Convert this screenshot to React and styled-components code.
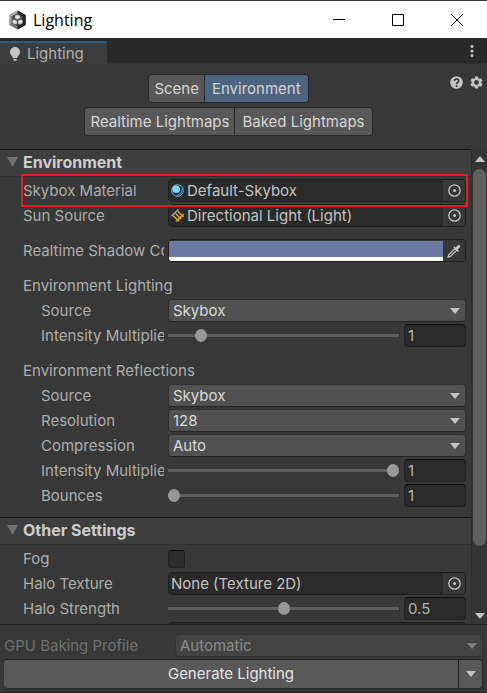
import React from "react";
import styled, { createGlobalStyle, css } from "styled-components";

const Global = createGlobalStyle`
  *, *::before, *::after { box-sizing: border-box; }
  body {
    margin: 0;
    background: #383838;
    color: #c4c4c4;
    font: 15px/22px Inter, "Liberation Sans", sans-serif;
  }
  button, input, select { font: inherit; color: inherit; margin: 0; }
`;

const Window = styled.div`
  display: flex;
  flex-direction: column;
  height: 100vh;
  overflow: hidden;
`;

const TitleBar = styled.header`
  display: flex;
  align-items: center;
  flex: none;
  height: 38px;
  padding: 0 1px 0 8px;
  border-top: 1px solid #33333b;
  background: #fff;
  color: #000;
`;

const WindowTitle = styled.h1`
  flex: 1;
  margin: 0 0 0 6px;
  font: 400 16px/24px "Open Sans", "Noto Sans", sans-serif;
`;

const CaptionButton = styled.button`
  display: grid;
  place-items: center;
  width: 59px;
  height: 37px;
  padding: 0;
  border: 0;
  background: none;
`;

const TabStrip = styled.nav`
  display: flex;
  justify-content: space-between;
  flex: none;
  height: 26px;
  padding-top: 3px;
  background: #282828;
  box-shadow: inset 0 -1px #303030;
`;

const Tab = styled.button`
  display: flex;
  align-items: center;
  gap: 7px;
  width: 107px;
  padding: 0 0 0 10px;
  border: 0;
  border-top: 2px solid #2c5d87;
  border-radius: 0 2px 0 0;
  background: #3c3c3c;
  color: #b0b0b0;
`;

const IconButton = styled.button`
  display: grid;
  place-items: center;
  width: ${(p) => p.$width || 20}px;
  height: 20px;
  padding: 0;
  border: 0;
  background: none;
  color: #c4c4c4;
`;

const Toolbar = styled.div`
  position: relative;
  flex: none;
  display: flex;
  flex-direction: column;
  align-items: center;
  gap: 4px;
  height: 85px;
  padding: 10px 30px 0 0;
`;

const ToolbarActions = styled.div`
  position: absolute;
  top: 8px;
  right: 1px;
  display: flex;
`;

const Segments = styled.div`
  display: flex;
  border: 1px solid #282828;
  border-radius: 4px;
  background: #282828;
  gap: 1px;
  overflow: hidden;
`;

const Segment = styled.button`
  height: 27px;
  padding: 0 5px;
  border: 0;
  background: ${(p) => (p.$active ? "#4d6380" : "#585858")};
  color: #d6d6d6;
  white-space: nowrap;

  &:last-child { padding: 0 7px; }
`;

const Body = styled.div`
  display: flex;
  flex: 1;
  min-height: 0;
`;

const Scroller = styled.main`
  flex: 1;
  min-width: 0;
  overflow: hidden auto;
  scrollbar-width: none;
`;

const SectionHeader = styled.h2`
  display: flex;
  align-items: center;
  gap: 5px;
  height: 28px;
  margin: 0;
  padding: 0 0 2px 7px;
  border-top: 1px solid #1a1a1a;
  border-bottom: 1px solid #303030;
  background: #3e3e3e;
  color: #cdcdcd;
  font-size: 16px;
  font-weight: 700;
`;

const Rows = styled.div`
  display: flex;
  flex-direction: column;
  gap: 2px;
  padding: 2px 5px ${(p) => p.$bottom || 0}px 23px;
`;

const Row = styled.div`
  position: relative;
  display: grid;
  grid-template-columns: 141px minmax(0, 1fr);
  align-items: center;
  column-gap: 4px;
  height: 23px;
  margin-top: ${(p) => (p.$spaced ? 10 : 0)}px;

  ${(p) =>
    p.$marked &&
    css`
      &::after {
        content: "";
        position: absolute;
        inset: -5px -2px;
        border: 2px solid #ed1c24;
        pointer-events: none;
        z-index: 1;
      }
    `}
`;

const Label = styled.label`
  padding-left: ${(p) => (p.$indent ? 18 : 0)}px;
  overflow: hidden;
  white-space: nowrap;
  color: #aeaeae;
`;

const GroupTitle = styled.h3`
  height: 23px;
  margin: 10px 0 0;
  color: #aeaeae;
  font-size: 15px;
  line-height: 23px;
  font-weight: 400;
`;

const ObjectBox = styled.div`
  display: flex;
  align-items: center;
  height: 23px;
  padding-left: 2px;
  border: 1px solid #1f1f1f;
  border-radius: 4px;
  background: #2a2a2a;
  overflow: hidden;
`;

const ObjectInput = styled.input`
  flex: 1;
  min-width: 0;
  padding: 0;
  margin-left: ${(p) => (p.$plain ? 0 : 3)}px;
  border: 0;
  background: none;
  color: #c4c4c4;
  outline: 0;
`;

const PickButton = styled.button`
  display: grid;
  place-items: center;
  width: 22px;
  height: 21px;
  padding: 0;
  border: 0;
  background: #373737;
  color: #c4c4c4;
`;

const ColorBox = styled(ObjectBox)`
  padding-left: 0;
  background: #373737;
`;

const Swatch = styled.button`
  flex: 1;
  height: 20px;
  padding: 0;
  border: 0;
  border-bottom: 4px solid #fff;
  background: #6b7aa3;
`;

const SelectWrap = styled.div`
  display: grid;
  align-items: center;
  flex: 1;
  opacity: ${(p) => (p.$disabled ? 0.5 : 1)};

  & > * { grid-area: 1 / 1; }
  & > svg { justify-self: end; margin-right: 6px; pointer-events: none; }
`;

const Select = styled.select`
  appearance: none;
  width: 100%;
  height: 23px;
  padding: 0 24px 1px 4px;
  border: 1px solid #303030;
  border-bottom-color: #242424;
  border-radius: 4px;
  background: #515151;
  color: #dadada;
  opacity: 1;
`;

const SliderGroup = styled.div`
  display: flex;
  align-items: center;
  gap: 5px;
`;

const Slider = styled.input`
  appearance: none;
  flex: 1;
  min-width: 0;
  height: 13px;
  background: linear-gradient(#5e5e5e, #5e5e5e) center / 100% 3px no-repeat;

  &::-webkit-slider-thumb {
    appearance: none;
    width: 12px;
    height: 13px;
    border-radius: 50%;
    background: #999;
  }
`;

const NumberInput = styled.input`
  width: 62px;
  height: 23px;
  padding: 0 3px;
  border: 1px solid #212121;
  border-top-color: #0d0d0d;
  border-radius: 4px;
  background: #2a2a2a;
  color: #b4b4b4;
  outline: 0;
`;

const CheckBox = styled.input`
  appearance: none;
  width: 17px;
  height: 18px;
  border: 1px solid #212121;
  border-top-color: #0d0d0d;
  border-radius: 3px;
  background: #2a2a2a;
`;

const ScrollBar = styled.div`
  display: flex;
  flex-direction: column;
  align-items: center;
  width: 16px;
  border-left: 1px solid #2e2e2e;
  background: #353535;
`;

const ScrollTrack = styled.div`
  flex: 1;
  width: 13px;
`;

const ScrollThumb = styled.div`
  height: 86%;
  border-radius: 7px;
  background: #5f5f5f;
`;

const ScrollDown = styled(IconButton)`
  height: 17px;
`;

const Footer = styled.footer`
  flex: none;
  padding: 9px 4px 3px;
  border-top: 1px solid #1c1c1c;
  border-bottom: 1px solid #1c1c1c;
`;

const ProfileRow = styled.div`
  display: flex;
  align-items: center;
  padding-bottom: 2px;
`;

const ProfileLabel = styled.label`
  width: 171px;
  color: #717171;
`;

const SplitButton = styled.div`
  display: flex;
  gap: 1px;
  padding: 1px 1px 1px 0;
  border-radius: 4px;
  background: #242424;
`;

const Generate = styled.button`
  flex: 1;
  height: 28px;
  padding: 0;
  border: 0;
  border-radius: 3px 0 0 3px;
  background: #585858;
  color: #e4e4e4;
`;

const GenerateMenu = styled(IconButton)`
  height: 28px;
  border-radius: 0 3px 3px 0;
  background: #585858;
`;

const Caret = ({ up, color = "#c4c4c4" }) => (
  <svg width="10" height="6" viewBox="0 0 10 6" aria-hidden="true">
    <path d={up ? "M0 6 5 0l5 6z" : "M0 0h10L5 6z"} fill={color} />
  </svg>
);

const Foldout = () => (
  <svg width="11" height="10" viewBox="0 0 11 10" aria-hidden="true">
    <path d="M0 0h11L5.500 10z" fill="#717171" />
  </svg>
);

const UnityIcon = () => (
  <svg width="19" height="20" viewBox="0 0 19 20" aria-hidden="true">
    <path d="M9.500 .5 17.700 5v10l-8.200 4.500L1.300 15V5z" fill="#777" />
    <path d="M9.500 .5 17.700 5v10l-8.200 4.500V16l5-3V6.500L9.500 4z" fill="#222" />
    <path d="M9.500 .5 1.300 5v10l2-1.700V6.500L9.500 3z" fill="#aaa" />
    <path d="m9.500 3.500 5.500 3v7l-5.500 3-5.500-3v-7z" fill="#4b4b4b" />
    <path d="m9.500 4.500 2.500 1.300v2.400L9.500 9.500 7 8.200V5.800zM6.500 9.500 9 11v2.500l-2.200 1L4.500 13v-2.500zM12.500 9.500l2 1V13l-2.300 1.500-2.200-1V11z" fill="#c8c8c8" />
    <path d="M8.300 6.200h2.400v1.500H8.300zM5.500 11h2v1.600h-2zM11.500 11h2v1.600h-2z" fill="#fff" />
  </svg>
);

const BulbIcon = () => (
  <svg width="10" height="14" viewBox="0 0 10 14" fill="#c4c4c4" aria-hidden="true">
    <path d="M5 0a5 5 0 0 0-5 5c0 2 1.200 3.200 2.300 4.200L2.700 11h4.600l.4-1.800C8.800 8.200 10 7 10 5a5 5 0 0 0-5-5zM3 12h4l-.8 1.700H3.800z" />
  </svg>
);

const MoreIcon = () => (
  <svg width="4" height="12" viewBox="0 0 4 12" fill="currentColor" aria-hidden="true">
    <circle cx="2" cy="1.500" r="1.500" />
    <circle cx="2" cy="6" r="1.500" />
    <circle cx="2" cy="10.500" r="1.500" />
  </svg>
);

const HelpIcon = () => (
  <svg width="13" height="13" viewBox="0 0 13 13" aria-hidden="true">
    <circle cx="6.500" cy="6.500" r="6.300" fill="#c4c4c4" />
    <path d="M4.400 5c0-1.300.9-2 2.100-2s2.200.7 2.200 1.800c0 1.600-2.100 1.500-2.100 3.200" fill="none" stroke="#303030" strokeWidth="1.600" />
    <circle cx="6.600" cy="9.900" r="1" fill="#303030" />
  </svg>
);

const GearIcon = () => (
  <svg width="13" height="13" viewBox="0 0 13 13" aria-hidden="true">
    <g fill="#c4c4c4">
      <path d="M5 .4h3l.5 2.400h-4zM5 12.600h3l.5-2.400h-4z" />
      <path d="M5 .4h3l.5 2.400h-4zM5 12.600h3l.5-2.400h-4z" transform="rotate(60 6.500 6.500)" />
      <path d="M5 .4h3l.5 2.400h-4zM5 12.600h3l.5-2.400h-4z" transform="rotate(120 6.500 6.500)" />
    </g>
    <circle cx="6.500" cy="6.500" r="3.500" fill="none" stroke="#c4c4c4" strokeWidth="2.200" />
  </svg>
);

const TargetIcon = () => (
  <svg width="13" height="13" viewBox="0 0 13 13" aria-hidden="true">
    <circle cx="6.500" cy="6.500" r="5.700" fill="none" stroke="currentColor" strokeWidth="1.300" />
    <circle cx="6.500" cy="6.500" r="1.600" fill="currentColor" />
  </svg>
);

const SphereIcon = () => (
  <svg width="13" height="13" viewBox="0 0 13 13" aria-hidden="true">
    <circle cx="6.500" cy="6.500" r="5.800" fill="#1b3440" stroke="#78bfdd" strokeWidth="1" />
    <path d="M11 3a6 6 0 0 1-8 8c4.500.5 8-3 8-8z" fill="#348aae" />
    <circle cx="5.200" cy="5.200" r="3.800" fill="#7fd6fd" />
  </svg>
);

const SunLightIcon = () => (
  <svg width="13" height="13" viewBox="0 0 13 13" aria-hidden="true">
    <path d="M.5 7 7.500.5" stroke="#a8a8a8" strokeWidth="1.400" />
    <path d="m2 6.500 4.500 4.500M4.500 4.500 9 9M7 2.500l4 4" stroke="#f5b301" strokeWidth="1.200" />
    <path d="M7.700 9.500v2.700H5zM10 7.300V10H7.300zM12.500 4.800v2.900H9.600z" fill="#f5b301" stroke="#f5b301" strokeWidth=".5" />
  </svg>
);

const DropperIcon = () => (
  <svg width="14" height="14" viewBox="0 0 14 14" aria-hidden="true">
    <path d="m8 4.500 1.700 1.700-6.300 6.200-2.400.9.700-2.400z" fill="none" stroke="#c4c4c4" strokeWidth="1.200" />
    <path d="m6.300 3.300 1-1 1.400 1.200L10.500 1.400C12 0 14.500 2 12.800 3.600l-2.100 2 1.200 1.300-1 1z" fill="#c4c4c4" />
  </svg>
);

function ObjectField({ id, label, value, icon, marked }) {
  return (
    <Row $marked={marked}>
      <Label htmlFor={id}>{label}</Label>
      <ObjectBox>
        {icon}
        <ObjectInput id={id} defaultValue={value} readOnly $plain={!icon} />
        <PickButton aria-label={`Select ${label}`}><TargetIcon /></PickButton>
      </ObjectBox>
    </Row>
  );
}

function SelectField({ id, label, options }) {
  return (
    <Row>
      <Label htmlFor={id} $indent>{label}</Label>
      <SelectWrap>
        <Select id={id}>{options.map((o) => <option key={o}>{o}</option>)}</Select>
        <Caret />
      </SelectWrap>
    </Row>
  );
}

function SliderField({ id, label, value, min, max, step, indent }) {
  return (
    <Row>
      <Label htmlFor={id} $indent={indent}>{label}</Label>
      <SliderGroup>
        <Slider id={id} type="range" min={min} max={max} step={step} defaultValue={value} />
        <NumberInput aria-label={`${label} value`} defaultValue={value} />
      </SliderGroup>
    </Row>
  );
}

export default function App() {
  return (
    <Window>
      <Global />
      <TitleBar>
        <UnityIcon />
        <WindowTitle>Lighting</WindowTitle>
        <CaptionButton aria-label="Minimize">
          <svg width="12" height="12"><path d="M0 5.500h12" stroke="#000" /></svg>
        </CaptionButton>
        <CaptionButton aria-label="Maximize">
          <svg width="12" height="12"><path d="M.5.5h11v11H.5z" fill="none" stroke="#000" /></svg>
        </CaptionButton>
        <CaptionButton aria-label="Close">
          <svg width="12" height="12"><path d="m0 0 12 12M12 0 0 12" stroke="#000" /></svg>
        </CaptionButton>
      </TitleBar>

      <TabStrip>
        <Tab><BulbIcon />Lighting</Tab>
        <IconButton $width={30} aria-label="More"><MoreIcon /></IconButton>
      </TabStrip>

      <Toolbar>
        <Segments>
          <Segment>Scene</Segment>
          <Segment $active aria-pressed="true">Environment</Segment>
        </Segments>
        <Segments>
          <Segment>Realtime Lightmaps</Segment>
          <Segment>Baked Lightmaps</Segment>
        </Segments>
        <ToolbarActions>
          <IconButton aria-label="Help"><HelpIcon /></IconButton>
          <IconButton aria-label="Settings"><GearIcon /></IconButton>
        </ToolbarActions>
      </Toolbar>

      <Body>
        <Scroller>
          <SectionHeader><Foldout />Environment</SectionHeader>
          <Rows $bottom={10}>
            <ObjectField id="skybox" label="Skybox Material" value="Default-Skybox" icon={<SphereIcon />} marked />
            <ObjectField id="sun" label="Sun Source" value="Directional Light (Light)" icon={<SunLightIcon />} />
            <Row $spaced>
              <Label htmlFor="shadow">Realtime Shadow Color</Label>
              <ColorBox>
                <Swatch id="shadow" />
                <PickButton aria-label="Pick color"><DropperIcon /></PickButton>
              </ColorBox>
            </Row>
            <GroupTitle>Environment Lighting</GroupTitle>
            <SelectField id="light-source" label="Source" options={["Skybox", "Gradient", "Color"]} />
            <SliderField id="light-intensity" label="Intensity Multiplier" value={1} min={0} max={8} step={0.1} indent />
            <GroupTitle>Environment Reflections</GroupTitle>
            <SelectField id="refl-source" label="Source" options={["Skybox", "Custom"]} />
            <SelectField id="resolution" label="Resolution" options={["128", "256", "512"]} />
            <SelectField id="compression" label="Compression" options={["Auto", "Compressed", "Uncompressed"]} />
            <SliderField id="refl-intensity" label="Intensity Multiplier" value={1} min={0} max={1} step={0.1} indent />
            <SliderField id="bounces" label="Bounces" value={1} min={1} max={5} step={1} indent />
          </Rows>

          <SectionHeader><Foldout />Other Settings</SectionHeader>
          <Rows>
            <Row>
              <Label htmlFor="fog">Fog</Label>
              <CheckBox id="fog" type="checkbox" />
            </Row>
            <ObjectField id="halo" label="Halo Texture" value="None (Texture 2D)" />
            <SliderField id="halo-strength" label="Halo Strength" value={0.5} min={0} max={1} step={0.1} />
            <Row>
              <span />
              <ObjectBox />
            </Row>
          </Rows>
        </Scroller>
        <ScrollBar>
          <IconButton $width={14} aria-label="Scroll up"><Caret up /></IconButton>
          <ScrollTrack><ScrollThumb /></ScrollTrack>
          <ScrollDown $width={14} aria-label="Scroll down"><Caret /></ScrollDown>
        </ScrollBar>
      </Body>

      <Footer>
        <ProfileRow>
          <ProfileLabel htmlFor="profile">GPU Baking Profile</ProfileLabel>
          <SelectWrap $disabled>
            <Select id="profile" disabled><option>Automatic</option></Select>
            <Caret />
          </SelectWrap>
        </ProfileRow>
        <SplitButton>
          <Generate>Generate Lighting</Generate>
          <GenerateMenu $width={23} aria-label="Generate options"><Caret /></GenerateMenu>
        </SplitButton>
      </Footer>
    </Window>
  );
}
